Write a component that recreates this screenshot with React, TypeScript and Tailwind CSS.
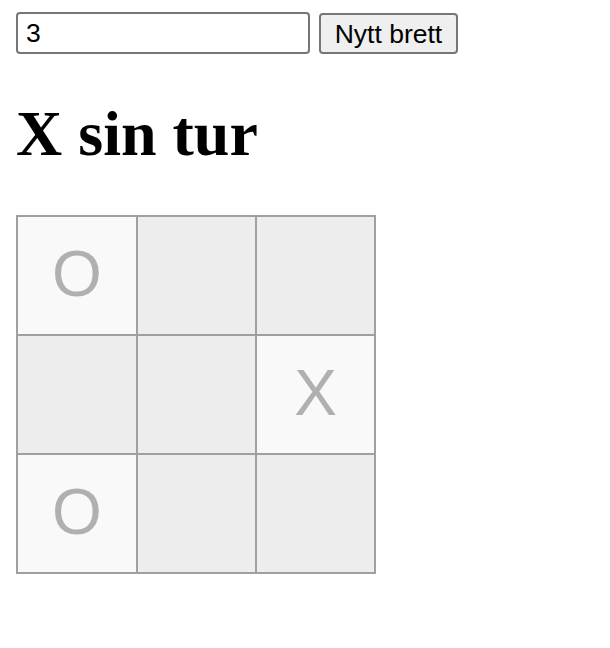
import React from "react";

const board: string[][] = [
  ["O", "", ""],
  ["", "", "X"],
  ["O", "", ""],
];

export default function App() {
  return (
    <div className="min-h-screen bg-white px-[16px] pt-[12px] [font-family:'Liberation_Sans',Arial,sans-serif]">
      <div className="flex items-start gap-[9px]">
        <input
          defaultValue="3"
          className="box-border h-[42px] w-[294px] rounded-[4px] border-2 border-[#767676] bg-white pl-[8px] pr-[4px] text-[26.5px] text-black outline-none"
        />
        <button className="mt-[1px] box-border h-[41px] w-[139px] rounded-[4px] border-2 border-[#767676] bg-[#efefef] text-[26.5px] text-black">
          Nytt brett
        </button>
      </div>
      <h1 className="mt-[43px] mb-[44px] text-[64px] font-bold leading-[74px] text-black [font-family:'Liberation_Serif','Times_New_Roman',serif]">
        X sin tur
      </h1>
      <div className="grid w-fit grid-cols-[118px_117px_117px] grid-rows-[117px_117px_117px] gap-[2px] bg-[#a0a0a0] p-[2px]">
        {board.flat().map((v, i) => (
          <div
            key={i}
            className={`flex items-center justify-center pb-[4px] text-[64px] leading-none text-[#b0b0b0] ${
              v ? "bg-[#f9f9f9]" : "bg-[#ededed]"
            }`}
          >
            {v}
          </div>
        ))}
      </div>
    </div>
  );
}
